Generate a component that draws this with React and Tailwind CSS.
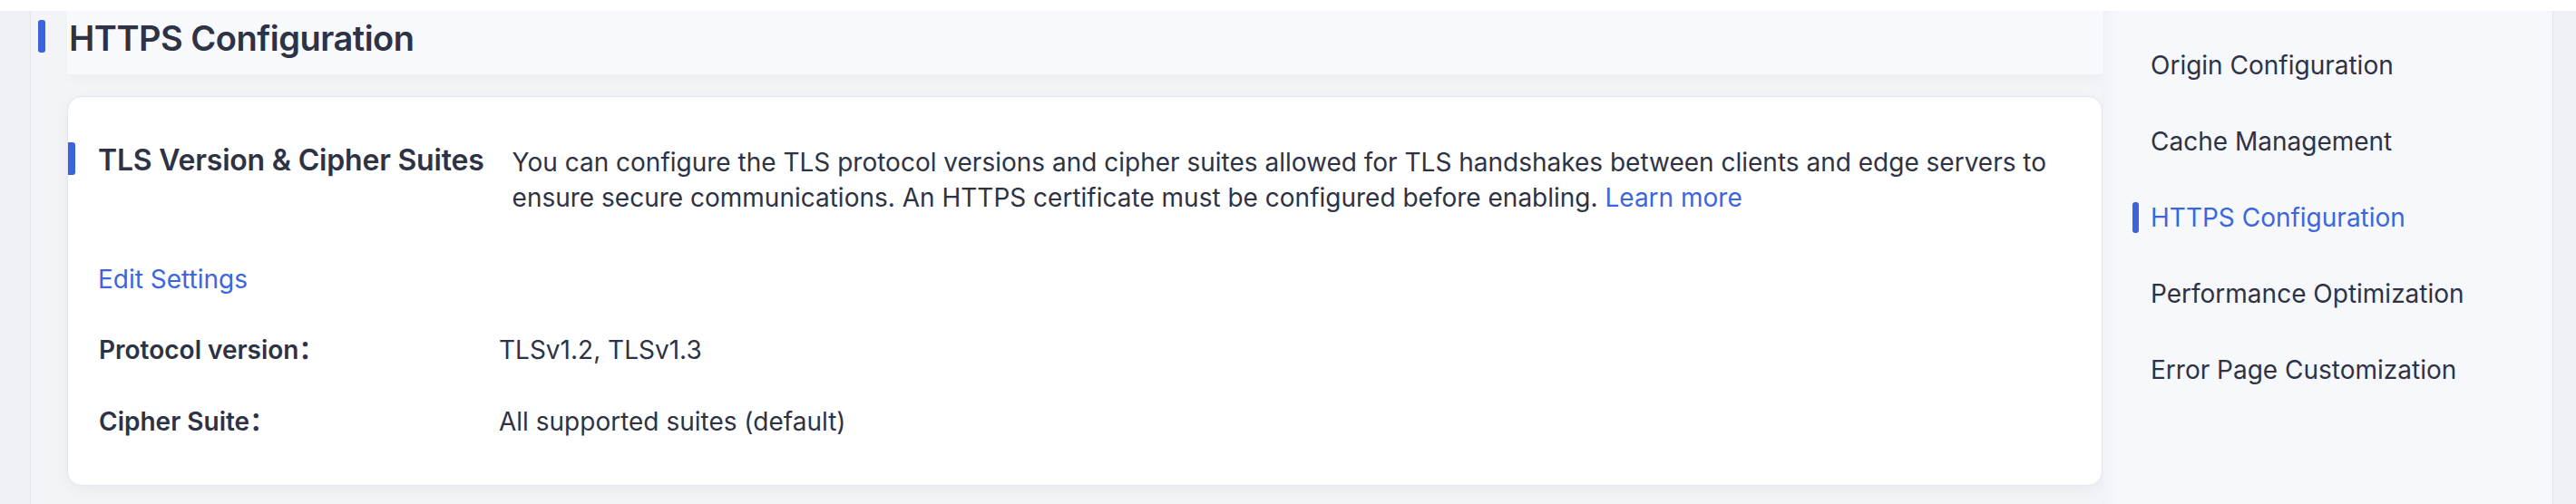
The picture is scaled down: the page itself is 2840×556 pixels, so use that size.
export default function App() {
  const font = { fontFamily: 'Inter, "Noto Sans CJK SC", sans-serif' };
  const nav = [
    { label: "Origin Configuration" },
    { label: "Cache Management" },
    { label: "HTTPS Configuration", active: true },
    { label: "Performance Optimization" },
    { label: "Error Page Customization" },
  ];
  return (
    <div className="w-[2840px] h-[556px] bg-white flex flex-col overflow-hidden text-[#2d3345]" style={font}>
      <div className="h-[12px] bg-white shrink-0" />
      <div className="flex flex-1 min-h-0">
        <div className="w-[34px] shrink-0 bg-[#eef0f5] border-r border-[#e2e5ee]" />
        <div className="w-[2284px] shrink-0 bg-[#f3f4f7] flex pl-[8px]">
          <div className="w-[8px] h-[36px] mt-[10px] rounded-[3px] bg-[#3a63dc] shrink-0" />
          <div className="ml-[24px] flex-1 flex flex-col">
            <div className="h-[70px] bg-[#f8f9fc] shadow-[0_6px_10px_rgba(0,0,0,0.025)] pt-[10px] pl-[2px]">
              <h1 className="text-[38px] leading-[40px] font-semibold tracking-[-0.5px]">HTTPS Configuration</h1>
            </div>
            <div className="mt-[24px] h-[430px] bg-white rounded-[16px] border border-[#e3e6ee] shadow-[0_4px_14px_rgba(30,40,80,0.05)] pt-[50px] pb-[50px] flex flex-col">
              <div className="flex items-start">
                <div className="w-[8px] h-[36px] rounded-r-[3px] bg-[#3a63dc] shrink-0" />
                <div className="ml-[25px] text-[32px] leading-[40px] font-semibold whitespace-nowrap tracking-[-0.2px]">
                  TLS Version &amp; Cipher Suites
                </div>
                <p className="ml-[31px] mt-[3px] text-[28px] leading-[39px] text-[#2d3345]">
                  You can configure the TLS protocol versions and cipher suites allowed for TLS handshakes between clients and edge servers to
                  <br />
                  ensure secure communications. An HTTPS certificate must be configured before enabling.{" "}
                  <span className="text-[#3b66dd]">Learn more</span>
                </p>
              </div>
              <div className="pl-[33px] mt-[50px] text-[28px] leading-[40px] text-[#3b66dd]">Edit Settings</div>
              <div className="pl-[34px] mt-[38px] flex text-[28px] leading-[40px]">
                <div className="w-[441px] font-semibold">Protocol version：</div>
                <div>TLSv1.2, TLSv1.3</div>
              </div>
              <div className="pl-[34px] mt-[39px] flex text-[28px] leading-[40px]">
                <div className="w-[441px] font-semibold">Cipher Suite：</div>
                <div>All supported suites (default)</div>
              </div>
            </div>
          </div>
        </div>
        <div className="w-[496px] shrink-0 bg-[#f7f8fc] shadow-[inset_14px_0_18px_-12px_rgba(30,40,80,0.05)] pt-[40px] pl-[33px] flex flex-col gap-[44px]">
          {nav.map((n) => (
            <div key={n.label} className="flex items-center h-[40px]">
              <div className={`w-[7px] h-[34px] rounded-[3px] ${n.active ? "bg-[#3a63dc]" : "bg-transparent"}`} />
              <span className={`ml-[13px] text-[28px] leading-[40px] whitespace-nowrap ${n.active ? "text-[#3b66dd]" : "text-[#2d3345]"}`}>
                {n.label}
              </span>
            </div>
          ))}
        </div>
        <div className="flex-1 bg-[#eef0f5] border-l border-[#e2e5ee]" />
      </div>
    </div>
  );
}
